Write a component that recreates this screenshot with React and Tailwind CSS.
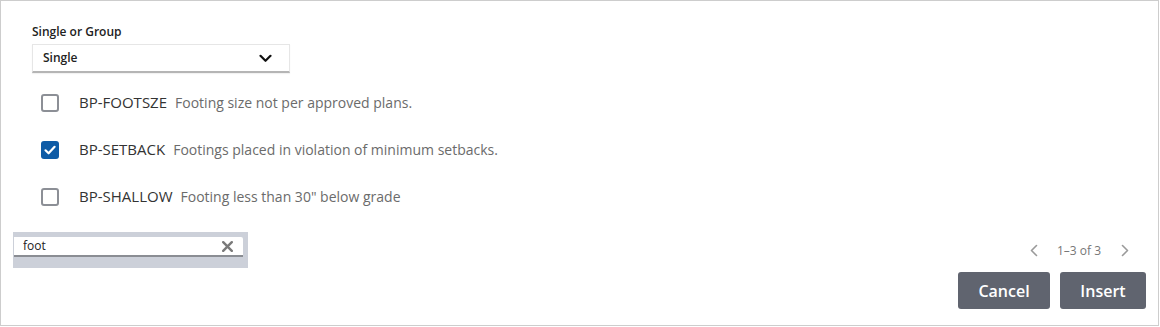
import React, { useState } from "react";

const codes = [
  { id: "BP-FOOTSZE", text: "Footing size not per approved plans." },
  { id: "BP-SETBACK", text: "Footings placed in violation of minimum setbacks." },
  { id: "BP-SHALLOW", text: 'Footing less than 30" below grade' },
];

const Checkbox = ({ checked, onClick }) => (
  <button
    onClick={onClick}
    className={
      checked
        ? "w-[18px] h-[18px] rounded-[3px] bg-[#0e5ba6] flex items-center justify-center shrink-0"
        : "w-[18px] h-[18px] rounded-[3px] border-2 border-[#8c8f96] bg-white shrink-0"
    }
  >
    {checked && (
      <svg width="14" height="14" viewBox="0 0 14 14" fill="none">
        <path
          d="M2.5 7.3 L5.6 10.3 L11.6 3.8"
          stroke="#fff"
          strokeWidth="2.2"
          strokeLinecap="round"
          strokeLinejoin="round"
        />
      </svg>
    )}
  </button>
);

const App = () => {
  const [selected, setSelected] = useState({ "BP-SETBACK": true });
  const [search, setSearch] = useState("foot");

  const toggle = (id) => setSelected((prev) => ({ ...prev, [id]: !prev[id] }));

  return (
    <div className="w-[1159px] h-[326px] border border-[#cdcdcd] bg-white font-['Open_Sans',sans-serif] text-[#333]">
      {/* Single or Group */}
      <div className="pt-[22px] pl-[31px]">
        <div className="text-[12px] leading-[18px] font-semibold text-[#222]">
          Single or Group
        </div>
        <div className="mt-[3px] w-[258px] h-[29px] border border-[#e6e6e6] border-b-2 border-b-[#b5b5b5] flex items-center justify-between pl-[10px] pr-[17px] shadow-[0_1px_1px_rgba(0,0,0,0.05)]">
          <span className="text-[12px] font-semibold text-[#222]">Single</span>
          <svg width="13" height="9" viewBox="0 0 13 9" fill="none">
            <path
              d="M1.5 1.8 L6.5 6.8 L11.5 1.8"
              stroke="#111"
              strokeWidth="2.2"
              strokeLinecap="round"
              strokeLinejoin="round"
            />
          </svg>
        </div>

        {/* Codes */}
        <div className="mt-[6px] pl-[9px]">
          {codes.map((code) => (
            <div key={code.id} className="h-[47px] flex items-center">
              <Checkbox
                checked={!!selected[code.id]}
                onClick={() => toggle(code.id)}
              />
              <span className="ml-[20px] text-[15px] text-[#333]">{code.id}</span>
              <span className="ml-[8px] text-[14px] text-[#6b6b6b]">
                {code.text}
              </span>
            </div>
          ))}
        </div>
      </div>

      {/* Bottom */}
      <div className="mt-[12px] pl-[12px] pr-[12px] flex justify-between items-start">
        <div className="w-[235px] h-[36px] bg-[#ccd0d9] pt-[5px] pl-[1px] pr-[5px]">
          <div className="h-[20px] bg-white border-b-2 border-b-[#8a8d93] flex items-center pl-[9px] pr-[10px] rounded-tr-[2px]">
            <input
              value={search}
              onChange={(e) => setSearch(e.target.value)}
              className="flex-1 min-w-0 text-[12px] text-[#222] outline-none bg-transparent"
            />
            <svg width="11" height="11" viewBox="0 0 11 11" fill="none">
              <path
                d="M1.2 1.2 L9.8 9.8 M9.8 1.2 L1.2 9.8"
                stroke="#7a7a7a"
                strokeWidth="2.4"
                strokeLinecap="round"
              />
            </svg>
          </div>
        </div>

        <div className="flex flex-col items-end pt-[8px]">
          <div className="h-[21px] flex items-center text-[12px] text-[#777] pr-[17px]">
            <svg width="8" height="13" viewBox="0 0 8 13" fill="none">
              <path
                d="M6.5 1.5 L1.5 6.5 L6.5 11.5"
                stroke="#9a9a9a"
                strokeWidth="1.6"
                strokeLinecap="round"
                strokeLinejoin="round"
              />
            </svg>
            <span className="ml-[19px] mr-[20px]">1–3 of 3</span>
            <svg width="8" height="13" viewBox="0 0 8 13" fill="none">
              <path
                d="M1.5 1.5 L6.5 6.5 L1.5 11.5"
                stroke="#9a9a9a"
                strokeWidth="1.6"
                strokeLinecap="round"
                strokeLinejoin="round"
              />
            </svg>
          </div>
          <div className="mt-[11px] flex gap-[10px]">
            <button className="w-[92px] h-[37px] rounded-[3px] bg-[#60646f] text-white text-[16px] font-semibold">
              Cancel
            </button>
            <button className="w-[86px] h-[37px] rounded-[3px] bg-[#60646f] text-white text-[16px] font-semibold">
              Insert
            </button>
          </div>
        </div>
      </div>
    </div>
  );
};

export default App;
